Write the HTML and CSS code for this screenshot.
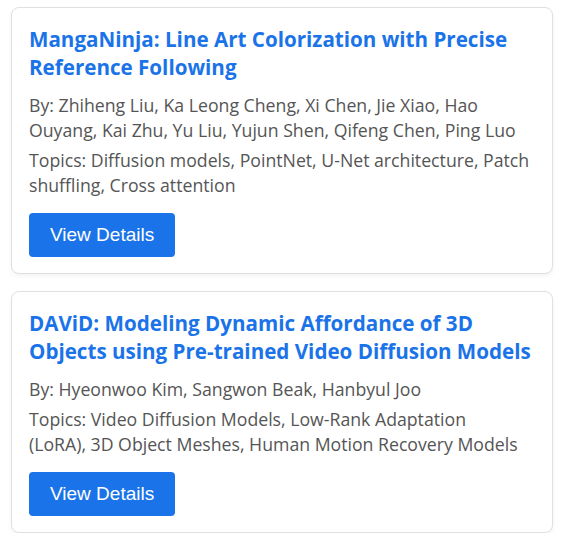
FILE: index.html
```html
<!DOCTYPE html>
<html>
<head>
<meta charset="utf-8">
<link rel="stylesheet" href="styles.css">
</head>
<body>
<div class="list">
  <div class="card">
    <h3 class="title">MangaNinja: Line Art Colorization with Precise Reference Following</h3>
    <p class="meta">By: Zhiheng Liu, Ka Leong Cheng, Xi Chen, Jie Xiao, Hao Ouyang, Kai Zhu, Yu Liu, Yujun Shen, Qifeng Chen, Ping Luo</p>
    <p class="meta">Topics: Diffusion models, PointNet, U-Net architecture, Patch shuffling, Cross attention</p>
    <button class="btn">View Details</button>
  </div>
  <div class="card">
    <h3 class="title">DAViD: Modeling Dynamic Affordance of 3D Objects using Pre-trained Video Diffusion Models</h3>
    <p class="meta">By: Hyeonwoo Kim, Sangwon Beak, Hanbyul Joo</p>
    <p class="meta">Topics: Video Diffusion Models, Low-Rank Adaptation<br>(LoRA), 3D Object Meshes, Human Motion Recovery Models</p>
    <button class="btn">View Details</button>
  </div>
</div>
</body>
</html>
```
FILE: styles.css
```css
body {
  margin: 0;
  background: #fff;
  font-family: "Open Sans", "Noto Sans", sans-serif;
}
.list {
  display: flex;
  flex-direction: column;
  gap: 17px;
  padding: 7px 0 0 11px;
  width: 542px;
}
.card {
  border: 1px solid #e0e0e0;
  border-radius: 8px;
  padding: 17px 17px 16px 17px;
  box-shadow: 0 2px 4px rgba(0,0,0,0.05);
  background: #fff;
}
.title {
  margin: 0 0 12px 0;
  font-size: 20.6px;
  line-height: 28px;
  font-weight: 700;
  color: #1a73e8;
}
.meta {
  margin: 0 0 5px 0;
  font-size: 17.7px;
  line-height: 25px;
  color: #555;
}
.btn {
  margin-top: 15px;
  display: block;
  border: none;
  border-radius: 4px;
  background: #1a73e8;
  color: #fff;
  font-family: "Liberation Sans", Arial, sans-serif;
  font-size: 19px;
  padding: 0 21px;
  height: 44px;
  cursor: pointer;
}
```
